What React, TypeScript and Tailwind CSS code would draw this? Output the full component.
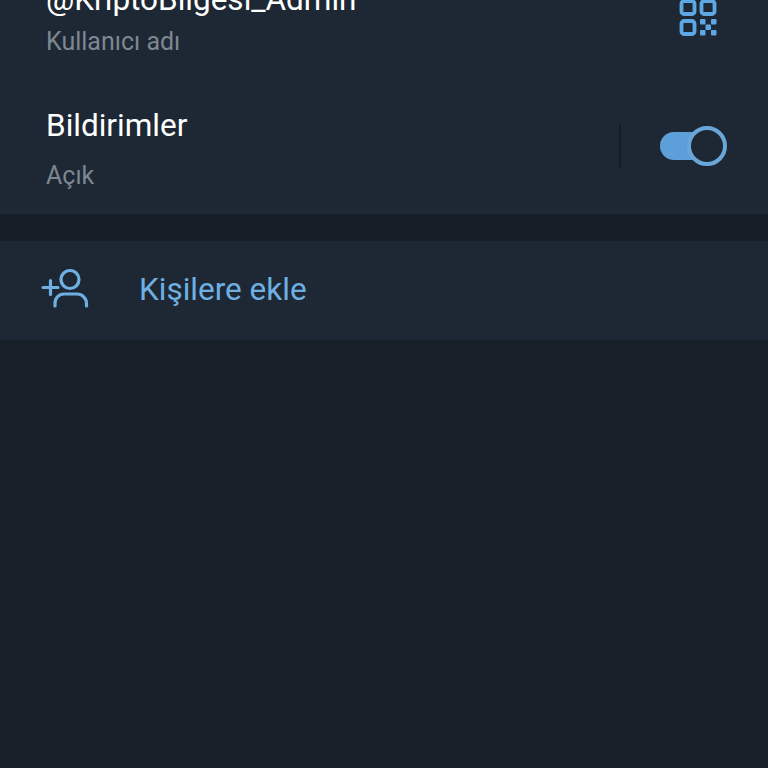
export default function App() {
  return (
    <div className="h-[768px] w-[768px] overflow-hidden bg-[#171f29] font-['Roboto',sans-serif]">
      <div className="h-[214px] overflow-hidden bg-[#1e2834]">
        <div className="relative -mt-[18px] h-[80px] pl-[46px]">
          <div className="text-[31.5px] leading-[36px] text-white">@KriptoBilgesi_Admin</div>
          <div className="mt-[9px] text-[25px] leading-[30px] text-[#7d8791]">Kullanıcı adı</div>
          <svg className="absolute left-[679px] top-[17px] h-[38px] w-[38px]" viewBox="0 0 38 38" fill="none" stroke="#5da8e4" strokeWidth="3.8">
            <rect x="2.500" y="2" width="13" height="13" rx="2.500" />
            <rect x="22.500" y="2" width="13" height="13" rx="2.500" />
            <rect x="2.500" y="22" width="13" height="13" rx="2.500" />
            <g fill="#5da8e4" stroke="none">
              <rect x="21" y="20" width="5.500" height="5.500" rx="1" />
              <rect x="32" y="20" width="5.500" height="5.500" rx="1" />
              <rect x="26.500" y="25.500" width="5.500" height="5.500" rx="1" />
              <rect x="21" y="31" width="5.500" height="5.500" rx="1" />
              <rect x="32" y="31" width="5.500" height="5.500" rx="1" />
            </g>
          </svg>
        </div>
        <div className="flex h-[132px] items-start pl-[46px] pr-[41px] pt-[46px]">
          <div className="flex-1">
            <div className="text-[31.5px] leading-[36px] text-white">Bildirimler</div>
            <div className="mt-[17px] text-[25px] leading-[30px] text-[#7d8791]">Açık</div>
          </div>
          <div className="mt-[16px] h-[44px] w-[2px] bg-[#151b23]" />
          <div className="relative ml-[39px] mt-[24px] h-[28px] w-[67px]">
            <div className="h-[28px] w-[60px] rounded-full bg-[#5d9fd8]" />
            <div className="absolute -top-[6px] right-0 h-[40px] w-[40px] rounded-full border-[4px] border-[#6aa6d8] bg-[#1e2834]" />
          </div>
        </div>
      </div>
      <div className="h-[27px] bg-[#171e27]" />
      <div className="flex h-[99px] items-center bg-[#1e2834] pl-[40px]">
        <svg className="-mt-[5px] h-[40px] w-[50px]" viewBox="0 0 50 40" fill="none" stroke="#6fb0e3" strokeWidth="3.2" strokeLinecap="round">
          <circle cx="30" cy="11.500" r="9" />
          <path d="M15 38v-3a9 9 0 0 1 9-9h13a9.500 9.500 0 0 1 9.500 9.500V38" />
          <path d="M3 19.500h15M10.500 12.500v14" />
        </svg>
        <div className="-mt-[2px] ml-[49px] text-[31.5px] leading-[36px] text-[#6fb0e3]">Kişilere ekle</div>
      </div>
    </div>
  );
}
